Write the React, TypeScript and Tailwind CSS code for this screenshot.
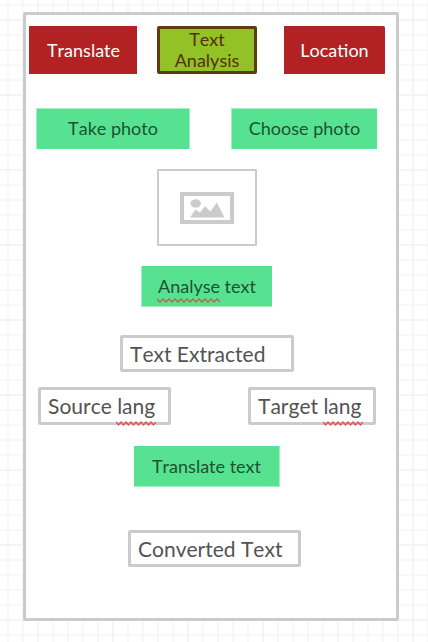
import React from "react";

function Squiggle({ width, step, className }: { width: number; step: number; className: string }) {
  const points: string[] = [];
  for (let x = 0, i = 0; x <= width; x += step, i++) {
    points.push(`${x},${i % 2 === 0 ? 1 : 4}`);
  }
  return (
    <svg width={width} height="5" viewBox={`0 0 ${width} 5`} className={`absolute ${className}`}>
      <polyline points={points.join(" ")} fill="none" stroke="currentColor" strokeWidth="1.3" />
    </svg>
  );
}

export default function App() {
  return (
    <div className="h-[642px] w-[428px] overflow-hidden bg-white bg-[linear-gradient(to_right,#f4f4f4_2px,transparent_2px),linear-gradient(to_bottom,#f4f4f4_2px,transparent_2px),linear-gradient(to_right,#f8f8f8_2px,transparent_2px),linear-gradient(to_bottom,#f8f8f8_2px,transparent_2px)] bg-[size:75px_75px,75px_75px,15px_15px,15px_15px] bg-[position:37px_0px,0px_19px,7px_0px,0px_4px] pt-[12px] pl-[23px] font-['Lato',sans-serif] whitespace-nowrap [font-kerning:none]">
      <main className="flex h-[609px] w-[376px] flex-col rounded-[2px] border-3 border-[#cbcbcb] bg-white pt-[11px] text-[18px] leading-[21px]">
        <nav className="flex h-12 pl-[3px] text-white">
          <button className="flex w-[108px] items-center justify-center bg-[#b22222] pt-px pl-px">Translate</button>
          <button className="ml-5 flex w-[100px] items-center justify-center rounded-[2px] border-3 border-[#613a12] bg-[#93c226] text-[#54300f]">
            <span>Text<br />Analysis</span>
          </button>
          <button className="ml-[27px] flex w-[101px] items-center justify-center rounded-tr-[2px] rounded-br-[1px] bg-[#b22222] pt-px">Location</button>
        </nav>

        <div className="mt-[34px] flex h-[41px] pl-[10px] text-[#1b5232]">
          <button className="flex w-[154px] items-center justify-center border-t border-r border-l border-[#a2efc3] bg-[#57e291] pb-px">Take photo</button>
          <button className="ml-[41px] flex w-[146px] items-center justify-center border-t border-l border-[#a2efc3] bg-[#57e291] pb-px">Choose photo</button>
        </div>

        <div className="mt-5 ml-[131px] flex h-[77px] w-[100px] items-center justify-center rounded-[1px] border-2 border-[#cbcbcb]">
          <svg width="54" height="32" viewBox="0 0 54 32" className="text-[#cbcbcb]">
            <rect x="2" y="2" width="50" height="28" fill="none" stroke="currentColor" strokeWidth="4" />
            <ellipse cx="15.7" cy="11.5" rx="5.2" ry="4.2" fill="currentColor" />
            <path d="M10 25.5 15.5 17.5 20 20.5 25 14.3 30.5 19.5 36.8 10.5 44.5 25.5Z" fill="currentColor" />
          </svg>
        </div>

        <button className="relative mt-5 ml-[115px] flex h-[41px] w-[131px] items-center justify-center border-b border-l border-[#a2efc3] bg-[#57e291] pt-px text-[#1b5232]">
          Analyse text
          <Squiggle width={64} step={3} className="top-[32px] left-[15px] text-[#ba6346]" />
        </button>

        <div className="mt-[28px] ml-[94px] flex h-[37px] w-[174px] items-center rounded-[2px] border-3 border-[#cbcbcb] pb-px pl-[7px] text-[21px] text-[#535353]">Text Extracted</div>

        <div className="mt-[15px] flex h-[38px] pl-[12px] text-[21px] text-[#535353]">
          <div className="relative flex w-[133px] items-center rounded-[2px] border-3 border-[#cbcbcb] pb-[2px] pl-[7px]">
            Source lang
            <Squiggle width={40} step={2.5} className="top-[31px] left-[75px] text-[#ec4e4e]" />
          </div>
          <div className="relative ml-[77px] flex w-[128px] items-center rounded-[2px] border-3 border-[#cbcbcb] pb-[2px] pl-[7px]">
            Target lang
            <Squiggle width={40} step={2.5} className="top-[31px] left-[72px] text-[#ec4e4e]" />
          </div>
        </div>

        <button className="mt-[21px] ml-[108px] flex h-[41px] w-[146px] items-center justify-center border-r border-b border-[#a2efc3] bg-[#57e291] pt-px text-[#1b5232]">Translate text</button>

        <div className="mt-[43px] ml-[102px] flex h-[37px] w-[173px] items-center rounded-[2px] border-3 border-[#cbcbcb] pb-px pl-[7px] text-[21px] text-[#535353]">Converted Text</div>
      </main>
    </div>
  );
}
